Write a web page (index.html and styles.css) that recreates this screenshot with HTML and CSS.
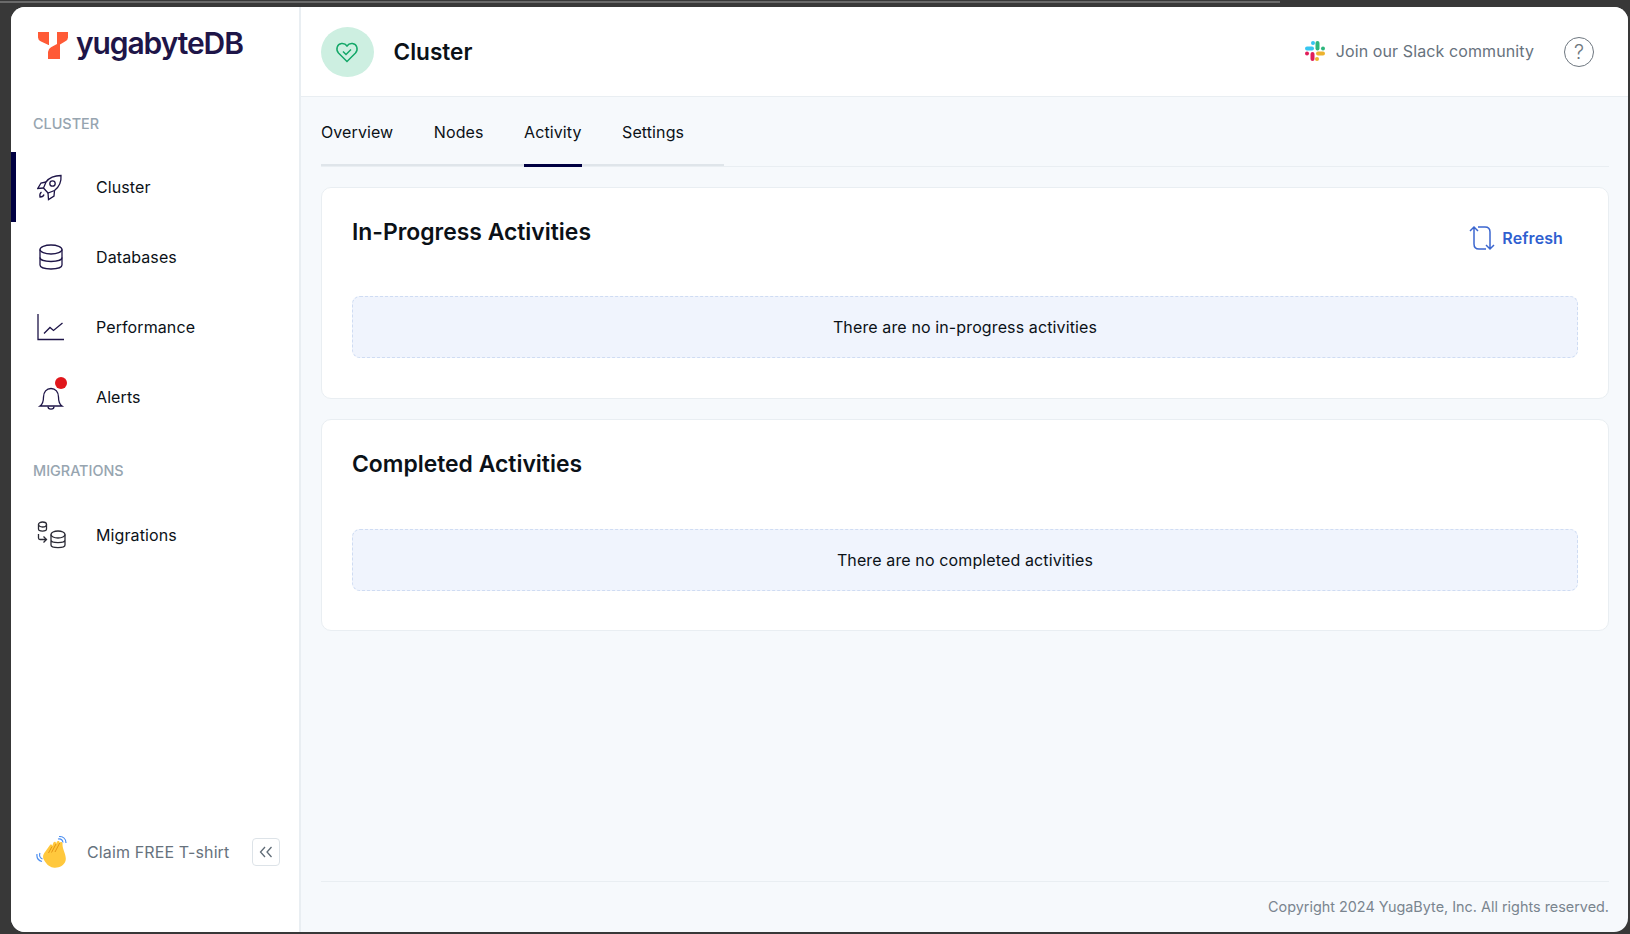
FILE: index.html
```html
<!DOCTYPE html>
<html lang="en">

<head>
    <meta charset="UTF-8">
    <title>YugabyteDB - Cluster Activity</title>
    <link rel="stylesheet" href="styles.css">
</head>

<body>
    <div class="top-line"></div>
    <div class="app">
        <!-- sidebar -->
        <aside class="sidebar">
            <div class="logo">
                <svg class="logo-mark" viewBox="0 0 30 27" width="30" height="27">
                    <path fill="#ff5a36" d="M0 0H11V13Q10.500 13 9.500 12.500L3 9.500Q0 8.200 0 5.500Z" />
                    <path fill="#ff5a36" d="M19 0H30V5.500Q30 8.200 27 9.600L22 12.500V27H10V20Q10 17 13 15.300L19 12Z" />
                </svg>
                <span class="logo-text">yugabyteDB</span>
            </div>

            <div class="nav-label">CLUSTER</div>
            <a class="nav-item active">
                <svg class="nav-icon" viewBox="0 0 28 28" width="28" height="28">
                    <path d="M24 2.500C24.500 9 22 14 17.500 17.500L11 20L6.500 15L9 9C12 5 17 2.500 24 2.500Z" />
                    <circle cx="15.500" cy="10.500" r="2.700" />
                    <path d="M9 9L4 10L0.800 15.500L6.500 15M17.500 17.500L17 23L11.500 26.500L11 20" />
                    <path d="M4.500 19C3 20 2.500 21.500 3 24C5 24 6.500 23.500 7 21.500" />
                </svg>
                <span>Cluster</span>
            </a>
            <a class="nav-item">
                <svg class="nav-icon" viewBox="0 0 28 28" width="28" height="28">
                    <ellipse cx="14" cy="6.500" rx="11" ry="4.500" />
                    <path d="M3 6.500V22C3 24.500 8 26 14 26S25 24.500 25 22V6.500" />
                    <path d="M3 14.500C3 17 8 18.500 14 18.500S25 17 25 14.500" />
                </svg>
                <span>Databases</span>
            </a>
            <a class="nav-item">
                <svg class="nav-icon" viewBox="0 0 28 28" width="28" height="28">
                    <path d="M1 1V26.500H27" />
                    <path d="M7 20.500L13 14.500L16.500 17.500L25.500 10" />
                </svg>
                <span>Performance</span>
            </a>
            <a class="nav-item">
                <svg class="nav-icon" viewBox="0 0 28 28" width="28" height="28">
                    <path d="M3 23C6 21 6.500 18 6.500 14C6.500 9 9.500 5.500 14 5.500S21.500 9 21.500 14C21.500 18 22 21 25 23Z" />
                    <path d="M11 23.500C11 27 17 27 17 23.500" />
                </svg>
                <span class="alert-dot"></span>
                <span>Alerts</span>
            </a>

            <div class="nav-label second">MIGRATIONS</div>
            <a class="nav-item">
                <svg class="nav-icon dark" viewBox="0 0 30 28" width="30" height="28">
                    <ellipse cx="5.500" cy="3.500" rx="4" ry="2.500" />
                    <path d="M1.500 3.500V8C1.500 10.800 9.500 10.800 9.500 8V3.500" />
                    <ellipse cx="21" cy="13.500" rx="7" ry="3.500" />
                    <path d="M14 13.500V24C14 27.500 28 27.500 28 24V13.500M14 19C14 22.500 28 22.500 28 19" />
                    <path d="M1.500 13V17Q1.500 18.500 3 18.500H9M6.500 15.500L9.500 18.500L6.500 21.500" />
                </svg>
                <span>Migrations</span>
            </a>

            <div class="claim">
                <svg class="wave" viewBox="0 0 32 32" width="32" height="32">
                    <path fill="#ffc83d" d="M8 24C6 21 7.500 18 9 16L14 9C15 8 16.500 9 16 10.500L17.500 6.500C18.500 5 20.500 6 20 8L21 5.500C22 4.300 24 5 23.700 7L24 6.500C25.500 5.500 27 6.500 26.500 8.500C26.500 14 31 19 29.500 25C28 30 22 32.500 17 31.500C13 31 10 27.500 8 24Z" />
                    <path fill="none" stroke="#e08f12" stroke-width="0.900" d="M16 10.500L12.500 17M20 8L15.500 16.500M23.700 7L19 16" />
                    <path fill="none" stroke="#4d8ff0" stroke-width="1.200" d="M22 3C24.500 2.500 26.500 4 27 6.500M23 0.500C27 0.500 30 3 30 7M4 17C3 19.500 4 22 6.500 23M1 18C0.500 21.500 2.500 24.500 6 25.500" />
                </svg>
                <span class="claim-text">Claim FREE T-shirt</span>
                <button class="collapse-btn">
                    <svg viewBox="0 0 14 12" width="14" height="12">
                        <path d="M6 1L1.500 6L6 11M12.500 1L8 6L12.500 11" />
                    </svg>
                </button>
            </div>
        </aside>

        <!-- main area -->
        <div class="main">
            <header class="topbar">
                <div class="status-circle">
                    <svg viewBox="0 0 24 24" width="24" height="24">
                        <path d="M12 21.500L3.500 13C0.500 9.500 2 4 6.500 3.500C9 3.200 11 4.500 12 6C13 4.500 15 3.200 17.500 3.500C22 4 23.500 9.500 20.500 13Z" />
                        <path d="M8 11.500L11 14.500L16 9.500" />
                    </svg>
                </div>
                <h1>Cluster</h1>
                <a class="slack">
                    <svg viewBox="0 0 20 20" width="20" height="20">
                        <line x1="2" y1="7.500" x2="7" y2="7.500" stroke="#36c5f0" stroke-width="4" stroke-linecap="round" />
                        <circle cx="8" cy="2" r="2" fill="#36c5f0" />
                        <line x1="12.500" y1="2" x2="12.500" y2="7.500" stroke="#2eb67d" stroke-width="4" stroke-linecap="round" />
                        <circle cx="18" cy="7.500" r="2" fill="#2eb67d" />
                        <line x1="13" y1="12.500" x2="18" y2="12.500" stroke="#ecb22e" stroke-width="4" stroke-linecap="round" />
                        <circle cx="12" cy="18" r="2" fill="#ecb22e" />
                        <line x1="7.500" y1="13" x2="7.500" y2="18" stroke="#e01e5a" stroke-width="4" stroke-linecap="round" />
                        <circle cx="2" cy="12.500" r="2" fill="#e01e5a" />
                    </svg>
                    <span>Join our Slack community</span>
                </a>
                <span class="help">?</span>
            </header>

            <div class="content">
                <nav class="tabs">
                    <a class="tab">Overview</a>
                    <a class="tab">Nodes</a>
                    <a class="tab current">Activity</a>
                    <a class="tab">Settings</a>
                </nav>

                <section class="card">
                    <div class="card-head">
                        <h2>In-Progress Activities</h2>
                        <a class="refresh">
                            <svg viewBox="0 0 26 26" width="26" height="26">
                                <path d="M1 6L5 2L9 6M5 2.500V19Q5 24 10 24H17" />
                                <path d="M25 20L21 24L17 20M21 23.500V7Q21 2 16 2H9" />
                            </svg>
                            <span>Refresh</span>
                        </a>
                    </div>
                    <div class="empty-box">There are no in-progress activities</div>
                </section>

                <section class="card">
                    <div class="card-head">
                        <h2>Completed Activities</h2>
                    </div>
                    <div class="empty-box">There are no completed activities</div>
                </section>

                <footer class="footer">Copyright 2024 YugaByte, Inc. All rights reserved.</footer>
            </div>
        </div>
    </div>
</body>

</html>
```

FILE: styles.css
```css
/* page */
* {
    box-sizing: border-box;
}

html,
body {
    height: 100%;
}

body {
    margin: 0;
    padding: 1px 2px 2px 11px;
    background-color: #383838;
    font-family: Inter, "Liberation Sans", sans-serif;
    color: #0b1117;
    display: flex;
    flex-direction: column;
    overflow: hidden;
}

.top-line {
    flex: none;
    height: 2px;
    width: 1280px;
    margin: 0 0 4px -11px;
    background-color: #6a6a6a;
}

.app {
    flex: 1;
    display: flex;
    min-height: 0;
    background-color: #f6f9fc;
    border-radius: 14px;
    overflow: hidden;
}

/* sidebar */
.sidebar {
    flex: none;
    width: 290px;
    background-color: #ffffff;
    border-right: 2px solid #e9eef2;
    display: flex;
    flex-direction: column;
}

.logo {
    display: flex;
    align-items: center;
    height: 68px;
    padding: 3px 0 0 27px;
    gap: 8px;
}

.logo-mark {
    margin-top: 5px;
}

.logo-text {
    font-family: Inter, sans-serif;
    font-size: 30px;
    font-weight: 600;
    letter-spacing: -1.100px;
    color: #1e1548;
}

.nav-label {
    margin: 40px 0 20px 22px;
    font-size: 14.400px;
    line-height: 17px;
    font-weight: 500;
    color: #97a5b0;
}

.nav-label.second {
    margin-top: 30px;
    margin-bottom: 21px;
}

.nav-item {
    position: relative;
    display: flex;
    align-items: center;
    height: 70px;
    padding-left: 26px;
    font-size: 16px;
    letter-spacing: 0.100px;
    color: #0b1117;
}

.nav-item span {
    margin-top: -1px;
}

.nav-item.active {
    box-shadow: inset 5px 0 0 #000041;
}

.nav-icon {
    flex: none;
    margin-right: 31px;
    fill: none;
    stroke: #1e1548;
    stroke-width: 1.300;
}

.nav-icon.dark {
    margin-right: 29px;
    stroke: #2a2a35;
}

.alert-dot {
    position: absolute;
    left: 44px;
    top: 16px;
    width: 12px;
    height: 12px;
    border-radius: 50%;
    background-color: #e0161b;
}

.claim {
    margin-top: auto;
    margin-bottom: 64px;
    display: flex;
    align-items: center;
    padding-left: 25px;
}

.wave {
    flex: none;
    margin-right: 19px;
}

.claim-text {
    font-size: 16px;
    letter-spacing: 0.120px;
    color: #67727d;
}

.collapse-btn {
    margin-left: 23px;
    width: 28px;
    height: 28px;
    padding: 0;
    display: flex;
    align-items: center;
    justify-content: center;
    background-color: #ffffff;
    border: 1px solid #dde3e8;
    border-radius: 4px;
}

.collapse-btn svg {
    fill: none;
    stroke: #5f6b76;
    stroke-width: 1.300;
}

/* main column */
.main {
    flex: 1;
    min-width: 0;
    display: flex;
    flex-direction: column;
}

.topbar {
    flex: none;
    height: 90px;
    display: flex;
    align-items: center;
    padding: 0 18px 0 20px;
    background-color: #ffffff;
    border-bottom: 1px solid #e9eef2;
}

.status-circle {
    width: 53px;
    height: 50px;
    border-radius: 50%;
    background-color: #cdefe1;
    display: flex;
    align-items: center;
    justify-content: center;
}

.status-circle svg {
    fill: none;
    stroke: #13a768;
    stroke-width: 1.500;
    margin-left: -2px;
}

h1 {
    margin: 0 0 0 19.500px;
    font-size: 22.600px;
    font-weight: 600;
    color: #0b1117;
}

.slack {
    margin-left: auto;
    margin-top: -2px;
    display: flex;
    align-items: center;
    gap: 11px;
    font-size: 16px;
    letter-spacing: 0.100px;
    color: #67727d;
}

.help {
    margin-left: 30px;
    margin-right: 16px;
    width: 30px;
    height: 30px;
    border: 1.500px solid #6e7780;
    border-radius: 50%;
    display: flex;
    align-items: center;
    justify-content: center;
    font-size: 20px;
    font-weight: 300;
    color: #6e7780;
}

/* tabs and cards */
.content {
    flex: 1;
    min-height: 0;
    display: flex;
    flex-direction: column;
    padding: 0 19px 0 20px;
}

.tabs {
    flex: none;
    display: flex;
    gap: 40.500px;
    height: 70px;
    margin-bottom: 20px;
    border-bottom: 1px solid #e9eef2;
    background-image: linear-gradient(#dfe5ea, #dfe5ea);
    background-size: 403px 2px;
    background-position: left bottom;
    background-repeat: no-repeat;
}

.tab {
    display: flex;
    align-items: center;
    height: 70px;
    font-size: 16px;
    letter-spacing: 0.100px;
    color: #0b1117;
}

.tab.current {
    border-bottom: 3px solid #000041;
    padding-top: 3px;
}

.card {
    flex: none;
    height: 212px;
    margin-bottom: 20px;
    padding: 31px 30px 0;
    background-color: #ffffff;
    border: 1px solid #e9eef2;
    border-radius: 10px;
}

.card-head {
    height: 77px;
    display: flex;
    justify-content: space-between;
    align-items: flex-start;
}

.card + .card .card-head {
    height: 78px;
}

h2 {
    margin: 0;
    font-size: 22.900px;
    line-height: 26px;
    font-weight: 600;
    color: #0b1117;
}

.refresh {
    display: flex;
    align-items: center;
    gap: 7px;
    margin: 6px 15px 0 0;
    font-size: 16px;
    letter-spacing: 0.100px;
    font-weight: 600;
    color: #2f5fd0;
}

.refresh svg {
    fill: none;
    stroke: #3b66cf;
    stroke-width: 1.500;
}

.empty-box {
    height: 62px;
    display: flex;
    align-items: center;
    justify-content: center;
    font-size: 16px;
    letter-spacing: 0.120px;
    color: #0b1117;
    background-color: #f0f4fd;
    border: 1px dashed #cfdcf3;
    border-radius: 8px;
}

.footer {
    margin-top: auto;
    height: 51px;
    padding-bottom: 2px;
    display: flex;
    align-items: center;
    justify-content: flex-end;
    border-top: 1px solid #e9eef2;
    font-size: 14.400px;
    color: #7a858f;
}
```
